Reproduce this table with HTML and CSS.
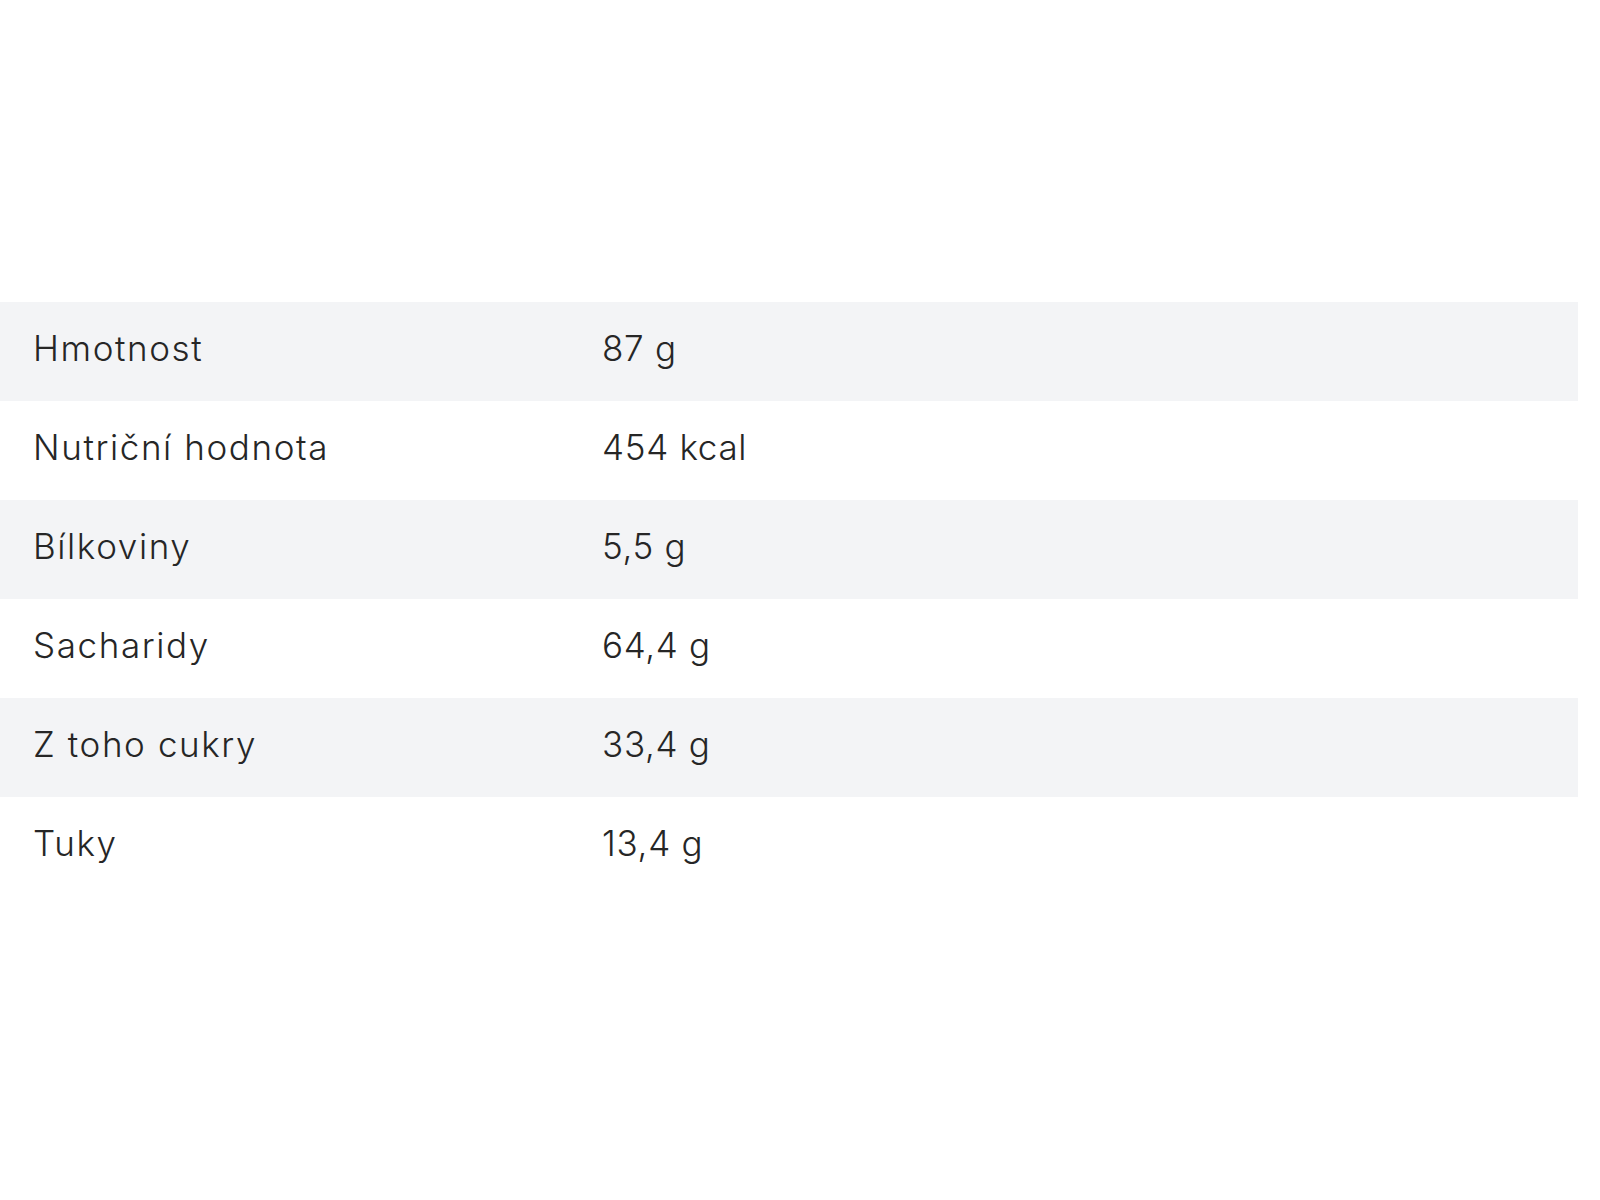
FILE: index.html
```html
<!DOCTYPE html>
<html lang="cs">
<head>
<meta charset="utf-8">
<title>Nutriční hodnoty</title>
<link rel="stylesheet" href="styles.css">
</head>
<body>
<div class="page">
  <div class="table">
    <div class="row alt"><div class="label">Hmotnost</div><div class="value">87 g</div></div>
    <div class="row"><div class="label">Nutriční hodnota</div><div class="value">454 kcal</div></div>
    <div class="row alt"><div class="label">Bílkoviny</div><div class="value">5,5 g</div></div>
    <div class="row"><div class="label">Sacharidy</div><div class="value">64,4 g</div></div>
    <div class="row alt"><div class="label">Z toho cukry</div><div class="value">33,4 g</div></div>
    <div class="row"><div class="label">Tuky</div><div class="value">13,4 g</div></div>
  </div>
</div>
</body>
</html>
```
FILE: styles.css
```css
html, body {
  margin: 0;
  padding: 0;
  background: #ffffff;
}
.page {
  padding-top: 302px;
  width: 1578px;
}
.table {
  display: flex;
  flex-direction: column;
}
.row {
  display: grid;
  grid-template-columns: 569px 1fr;
  align-items: center;
  height: 99px;
  padding-left: 33px;
  font-family: Inter, "Noto Sans", sans-serif;
  font-size: 35px;
  font-weight: 300;
  color: #262626;
}
.row.alt {
  background: #f3f4f6;
}
.label, .value {
  line-height: 1;
  padding-bottom: 6px;
}
.label {
  letter-spacing: 1.6px;
}
.value {
  letter-spacing: 0.7px;
}
```
